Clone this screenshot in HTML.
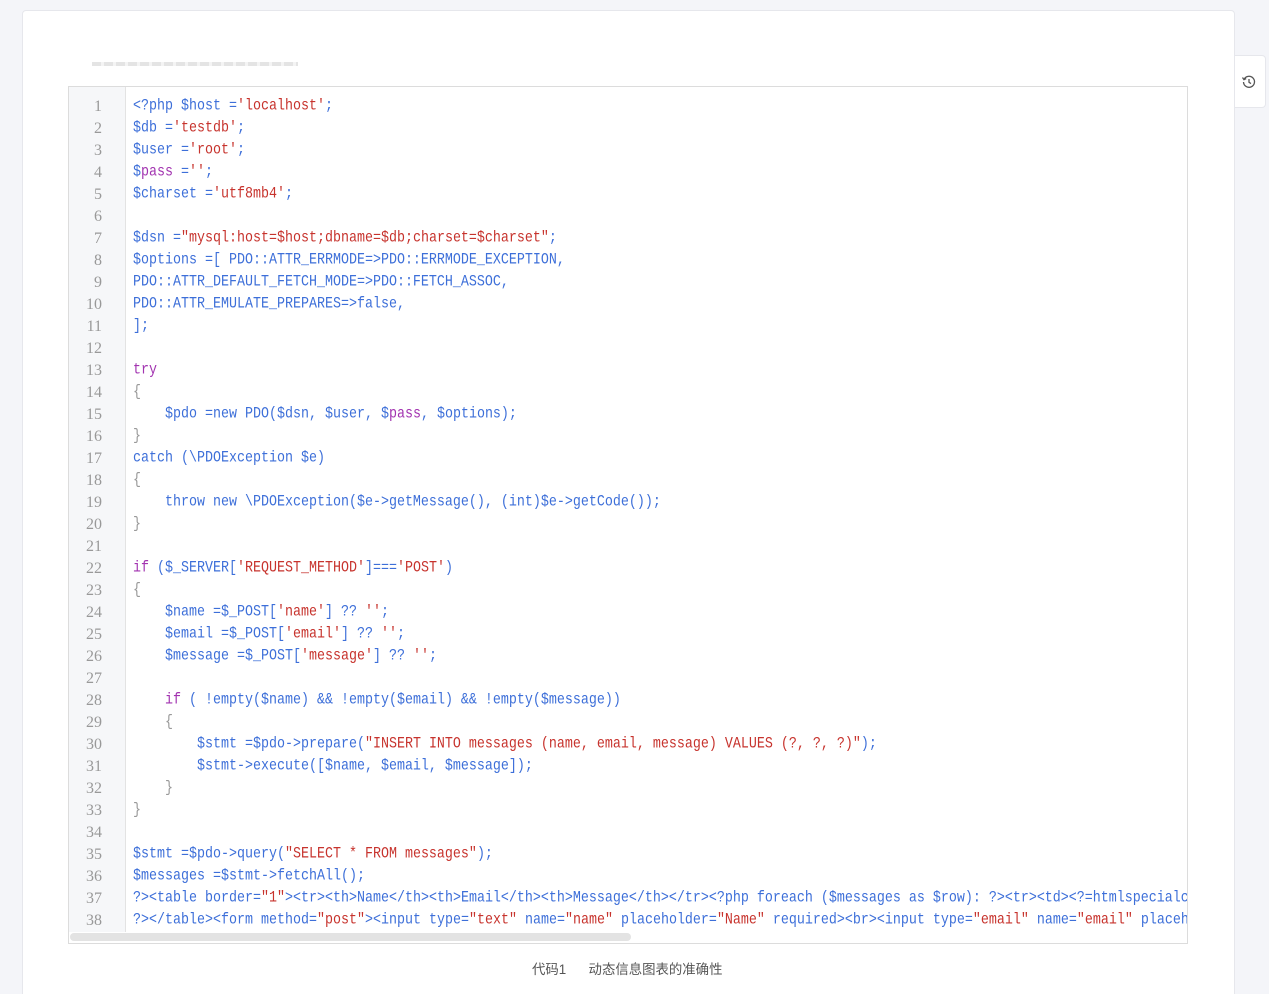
<!DOCTYPE html>
<html><head><meta charset="utf-8"><style>
html,body{margin:0;padding:0;overflow:hidden;}
body{width:1269px;height:994px;background:#f4f5f9;position:relative;overflow:hidden;font-family:"Liberation Sans","Noto Sans CJK SC",sans-serif;}
.card{position:absolute;left:22px;top:10px;width:1211px;height:1000px;background:#fff;border:1px solid #e6e7ec;border-radius:4px;}
.side{position:absolute;left:1235px;top:55px;width:30px;height:51px;background:#fff;border:1px solid #e6e7ec;border-left:none;border-radius:0 4px 4px 0;}
.faint{position:absolute;left:92px;top:62px;width:206px;height:4px;overflow:hidden;background:repeating-linear-gradient(90deg,#e4e4e4 0 9px,#f4f4f4 9px 12px);}
.code{position:absolute;left:68px;top:86px;width:1118px;height:856px;border:1px solid #dcdcdc;background:#fff;overflow:hidden;}
.gut{position:absolute;left:0;top:0;width:56px;height:845px;background:#f6f7f9;border-right:1px solid #e3e3e3;}
.lines{position:absolute;left:0;top:9px;width:100%;}
.ln{height:22px;line-height:22px;font-family:"Liberation Mono",monospace;font-size:13.33px;white-space:pre;position:relative;}
.ln .n{position:absolute;left:0;width:33px;text-align:right;color:#999;font-family:"Liberation Serif",serif;font-size:16px;}
.ln .c{position:absolute;left:64px;color:#3d6fd9;transform:scaleY(1.18);transform-origin:0 50%;}
.s{color:#c7332d}.p{color:#a233b0}.g{color:#999}
.bar{position:absolute;left:1px;top:846px;width:561px;height:8px;background:#e3e3e3;border-radius:4px;}
.cap{position:absolute;left:532px;top:958px;font-size:13.4px;color:#555;white-space:pre;}
</style></head><body>
<div class="card"></div>
<div class="side"><svg width="16" height="16" viewBox="0 0 16 16" style="position:absolute;left:6px;top:18px" fill="none" stroke="#555" stroke-width="1.3"><path d="M3 5.5A5.5 5.5 0 1 1 2.5 8"/><path d="M1.5 3.5L3 5.7 5.2 4.6"/><path d="M8 5v3.3l2 1.3"/></svg></div>
<div class="faint"></div>
<div class="code">
<div class="gut"></div>
<div class="lines">
<div class="ln"><span class="n">1</span><span class="c">&lt;?php $host =<span class="s">'localhost'</span>;</span></div>
<div class="ln"><span class="n">2</span><span class="c">$db =<span class="s">'testdb'</span>;</span></div>
<div class="ln"><span class="n">3</span><span class="c">$user =<span class="s">'root'</span>;</span></div>
<div class="ln"><span class="n">4</span><span class="c">$<span class="p">pass</span> =<span class="s">''</span>;</span></div>
<div class="ln"><span class="n">5</span><span class="c">$charset =<span class="s">'utf8mb4'</span>;</span></div>
<div class="ln"><span class="n">6</span><span class="c"></span></div>
<div class="ln"><span class="n">7</span><span class="c">$dsn =<span class="s">"mysql:host=$host;dbname=$db;charset=$charset"</span>;</span></div>
<div class="ln"><span class="n">8</span><span class="c">$options =[ PDO::ATTR_ERRMODE=&gt;PDO::ERRMODE_EXCEPTION,</span></div>
<div class="ln"><span class="n">9</span><span class="c">PDO::ATTR_DEFAULT_FETCH_MODE=&gt;PDO::FETCH_ASSOC,</span></div>
<div class="ln"><span class="n">10</span><span class="c">PDO::ATTR_EMULATE_PREPARES=&gt;false,</span></div>
<div class="ln"><span class="n">11</span><span class="c">];</span></div>
<div class="ln"><span class="n">12</span><span class="c"></span></div>
<div class="ln"><span class="n">13</span><span class="c"><span class="p">try</span></span></div>
<div class="ln"><span class="n">14</span><span class="c"><span class="g">{</span></span></div>
<div class="ln"><span class="n">15</span><span class="c">    $pdo =new PDO($dsn, $user, $<span class="p">pass</span>, $options);</span></div>
<div class="ln"><span class="n">16</span><span class="c"><span class="g">}</span></span></div>
<div class="ln"><span class="n">17</span><span class="c">catch (\PDOException $e)</span></div>
<div class="ln"><span class="n">18</span><span class="c"><span class="g">{</span></span></div>
<div class="ln"><span class="n">19</span><span class="c">    throw new \PDOException($e-&gt;getMessage(), (int)$e-&gt;getCode());</span></div>
<div class="ln"><span class="n">20</span><span class="c"><span class="g">}</span></span></div>
<div class="ln"><span class="n">21</span><span class="c"></span></div>
<div class="ln"><span class="n">22</span><span class="c"><span class="p">if</span> ($_SERVER[<span class="s">'REQUEST_METHOD'</span>]===<span class="s">'POST'</span>)</span></div>
<div class="ln"><span class="n">23</span><span class="c"><span class="g">{</span></span></div>
<div class="ln"><span class="n">24</span><span class="c">    $name =$_POST[<span class="s">'name'</span>] ?? <span class="s">''</span>;</span></div>
<div class="ln"><span class="n">25</span><span class="c">    $email =$_POST[<span class="s">'email'</span>] ?? <span class="s">''</span>;</span></div>
<div class="ln"><span class="n">26</span><span class="c">    $message =$_POST[<span class="s">'message'</span>] ?? <span class="s">''</span>;</span></div>
<div class="ln"><span class="n">27</span><span class="c"></span></div>
<div class="ln"><span class="n">28</span><span class="c">    <span class="p">if</span> ( !empty($name) &amp;&amp; !empty($email) &amp;&amp; !empty($message))</span></div>
<div class="ln"><span class="n">29</span><span class="c">    <span class="g">{</span></span></div>
<div class="ln"><span class="n">30</span><span class="c">        $stmt =$pdo-&gt;prepare(<span class="s">"INSERT INTO messages (name, email, message) VALUES (?, ?, ?)"</span>);</span></div>
<div class="ln"><span class="n">31</span><span class="c">        $stmt-&gt;execute([$name, $email, $message]);</span></div>
<div class="ln"><span class="n">32</span><span class="c">    <span class="g">}</span></span></div>
<div class="ln"><span class="n">33</span><span class="c"><span class="g">}</span></span></div>
<div class="ln"><span class="n">34</span><span class="c"></span></div>
<div class="ln"><span class="n">35</span><span class="c">$stmt =$pdo-&gt;query(<span class="s">"SELECT * FROM messages"</span>);</span></div>
<div class="ln"><span class="n">36</span><span class="c">$messages =$stmt-&gt;fetchAll();</span></div>
<div class="ln"><span class="n">37</span><span class="c">?&gt;&lt;table border=<span class="s">"1"</span>&gt;&lt;tr&gt;&lt;th&gt;Name&lt;/th&gt;&lt;th&gt;Email&lt;/th&gt;&lt;th&gt;Message&lt;/th&gt;&lt;/tr&gt;&lt;?php foreach ($messages as $row): ?&gt;&lt;tr&gt;&lt;td&gt;&lt;?=htmlspecialchars</span></div>
<div class="ln"><span class="n">38</span><span class="c">?&gt;&lt;/table&gt;&lt;form method=<span class="s">"post"</span>&gt;&lt;input type=<span class="s">"text"</span> name=<span class="s">"name"</span> placeholder=<span class="s">"Name"</span> required&gt;&lt;br&gt;&lt;input type=<span class="s">"email"</span> name=<span class="s">"email"</span> placeholder</span></div>
</div>
<div class="bar"></div>
</div>
<div class="cap">代码1      动态信息图表的准确性</div>
</body></html>
